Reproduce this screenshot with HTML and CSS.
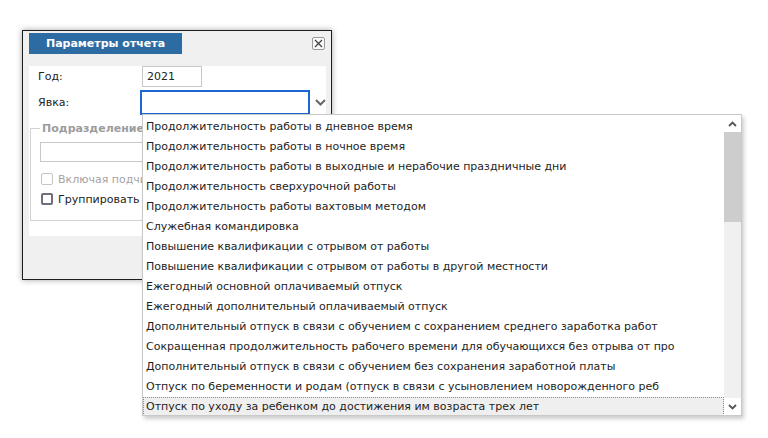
FILE: index.html
```html
<!DOCTYPE html>
<html lang="ru">
<head>
    <meta charset="UTF-8">
    <title>Параметры отчета</title>
    <link rel="stylesheet" href="styles.css">
</head>
<body>
    <div class="dialog">
        <div class="dialog-head">
            <div class="tab">Параметры отчета</div>
            <button class="close" title="Закрыть">
                <svg width="9" height="9" viewBox="0 0 9 9"><path d="M1 1 L8 8 M8 1 L1 8" stroke="#444" stroke-width="1.3"/></svg>
            </button>
        </div>
        <div class="panel">
            <div class="rows">
                <label class="caption">Год:</label>
                <input class="field year" type="text" value="2021">
                <label class="caption">Явка:</label>
                <div class="combo">
                    <div class="combo-box"></div>
                    <svg class="chevron" width="11" height="7" viewBox="0 0 11 7"><path d="M1 1 L5.5 5.5 L10 1" fill="none" stroke="#666" stroke-width="2"/></svg>

                    <div class="dropdown">
                        <ul class="options">
                            <li>Продолжительность работы в дневное время</li>
                            <li>Продолжительность работы в ночное время</li>
                            <li>Продолжительность работы в выходные и нерабочие праздничные дни</li>
                            <li>Продолжительность сверхурочной работы</li>
                            <li>Продолжительность работы вахтовым методом</li>
                            <li>Служебная командировка</li>
                            <li>Повышение квалификации с отрывом от работы</li>
                            <li>Повышение квалификации с отрывом от работы в другой местности</li>
                            <li>Ежегодный основной оплачиваемый отпуск</li>
                            <li>Ежегодный дополнительный оплачиваемый отпуск</li>
                            <li>Дополнительный отпуск в связи с обучением с сохранением среднего заработка работ</li>
                            <li>Сокращенная продолжительность рабочего времени для обучающихся без отрыва от про</li>
                            <li>Дополнительный отпуск в связи с обучением без сохранения заработной платы</li>
                            <li>Отпуск по беременности и родам (отпуск в связи с усыновлением новорожденного реб</li>
                            <li class="active">Отпуск по уходу за ребенком до достижения им возраста трех лет</li>
                        </ul>
                        <div class="scrollbar">
                            <div class="arrow">
                                <svg width="9" height="6" viewBox="0 0 9 6"><path d="M1 5 L4.5 1.5 L8 5" fill="none" stroke="#555" stroke-width="1.8"/></svg>
                            </div>
                            <div class="thumb"></div>
                            <div class="track"></div>
                            <div class="arrow">
                                <svg width="9" height="6" viewBox="0 0 9 6"><path d="M1 1 L4.5 4.5 L8 1" fill="none" stroke="#555" stroke-width="1.8"/></svg>
                            </div>
                        </div>
                    </div>
                </div>
            </div>

            <fieldset class="group">
                <legend>Подразделение</legend>
                <input class="field wide" type="text">
                <div class="check disabled"><span class="box"></span>Включая подчиненные</div>
                <div class="check"><span class="box"></span>Группировать по подразделениям</div>
            </fieldset>
        </div>
    </div>
</body>
</html>
```

FILE: styles.css
```css
html, body {
    height: 100%;
}
body {
    box-sizing: border-box;
    margin: 0;
    padding: 30px 0 0 22px;
    background: #ffffff;
    font-family: 'DejaVu Sans', Verdana, sans-serif;
    font-size: 11px;
    color: #222222;
}
.dialog {
    box-sizing: border-box;
    width: 310px;
    height: 250px;
    padding: 2px 5px 0 6px;
    background: #f0f0f0;
    border: 1px solid #1e1e1e;
    box-shadow: 0 0 6px rgba(0, 0, 0, 0.35);
}
.dialog-head {
    display: flex;
    justify-content: space-between;
    align-items: flex-start;
    height: 21px;
}
.tab {
    width: 153px;
    height: 21px;
    line-height: 21px;
    text-align: center;
    background: #2d6ca3;
    color: #ffffff;
    font-weight: bold;
}
.close {
    box-sizing: border-box;
    width: 13px;
    height: 13px;
    margin: 4px 1px 0 0;
    padding: 0;
    display: flex;
    align-items: center;
    justify-content: center;
    background: #f8f8f8;
    border: 1px solid #9a9a9a;
    border-radius: 2px;
}
.panel {
    box-sizing: border-box;
    height: 170px;
    margin-top: 12px;
    background: #ffffff;
}
.rows {
    display: grid;
    grid-template-columns: 104px auto;
    row-gap: 3px;
    align-items: center;
    padding-left: 9px;
}
.caption {
    color: #222222;
}
.field {
    box-sizing: border-box;
    height: 21px;
    margin: 0;
    padding: 0 4px;
    border: 1px solid #c8c8c8;
    font-family: inherit;
    font-size: 11px;
    color: #222222;
    outline: none;
}
.year {
    width: 60px;
}
.combo {
    position: relative;
    display: flex;
    align-items: center;
    margin-left: -2px;
}
.combo-box {
    box-sizing: border-box;
    width: 170px;
    height: 25px;
    border: 2px solid #1b68d2;
    background: #ffffff;
}
.chevron {
    margin: 0 0 0 5px;
}
.dropdown {
    position: absolute;
    left: 2px;
    top: 24px;
    z-index: 10;
    box-sizing: border-box;
    width: 600px;
    height: 302px;
    display: flex;
    background: #ffffff;
    border: 1px solid #c9c9c9;
    box-shadow: 2px 3px 4px rgba(0, 0, 0, 0.2);
}
.options {
    flex: 1;
    margin: 0;
    padding: 2px 0 0;
    list-style: none;
    overflow: hidden;
}
.options li {
    box-sizing: border-box;
    height: 20px;
    line-height: 20px;
    padding-left: 3px;
    white-space: nowrap;
    overflow: hidden;
    color: #1e1e1e;
}
.options li.active {
    height: 19px;
    line-height: 17px;
    background: #efefef;
    border: 1px dotted #8a8a8a;
    padding-left: 2px;
}
.scrollbar {
    width: 17px;
    display: flex;
    flex-direction: column;
    background: #f0f0f0;
}
.arrow {
    height: 17px;
    display: flex;
    align-items: center;
    justify-content: center;
    background: #ffffff;
}
.thumb {
    height: 90px;
    background: #cdcdcd;
}
.track {
    flex: 1;
}
.group {
    margin: 7px 1px 0;
    padding: 0 9px 11px;
    border: 1px solid #d2d2d2;
}
.group legend {
    padding: 0 2px;
    line-height: 13px;
    font-weight: bold;
    color: #9c9c9c;
}
.wide {
    display: block;
    width: 100%;
    height: 20px;
    margin-top: 7px;
}
.check {
    display: flex;
    align-items: center;
    height: 20px;
    white-space: nowrap;
}
.check:first-of-type {
    margin-top: 7px;
}
.box {
    box-sizing: border-box;
    width: 12px;
    height: 12px;
    margin: 0 5px 0 1px;
    border: 2px solid #6e6e7c;
    border-radius: 2px;
    background: #ffffff;
}
.check.disabled {
    color: #a4a4a4;
}
.check.disabled .box {
    border: 1px solid #c4c4c4;
}
```
